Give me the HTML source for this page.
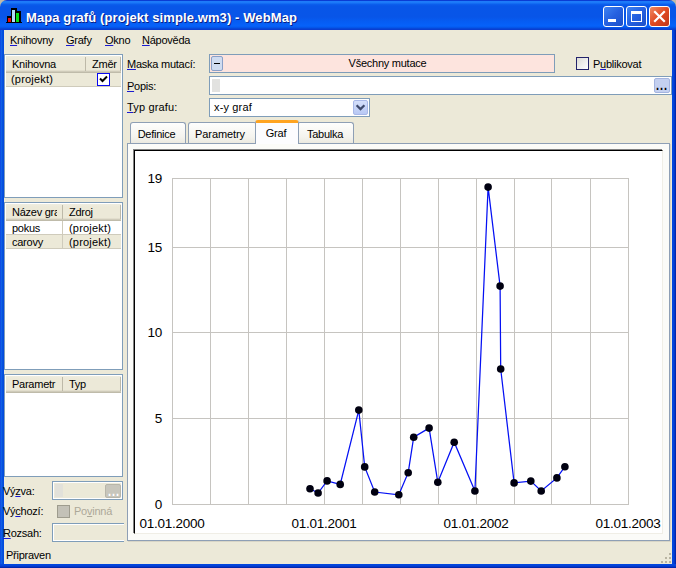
<!DOCTYPE html>
<html lang="cs">
<head>
<meta charset="utf-8">
<title>Mapa grafů (projekt simple.wm3) - WebMap</title>
<style>
html,body{margin:0;padding:0;}
body{width:676px;height:568px;overflow:hidden;background:#ece9d8;font-family:"Liberation Sans",sans-serif;font-size:11px;letter-spacing:-0.25px;color:#000;position:relative;}
.abs{position:absolute;}
#win{position:absolute;left:0;top:0;width:676px;height:568px;background:#ece9d8;overflow:hidden;}
/* window frame */
#title{position:absolute;left:0;top:0;width:676px;height:30px;border-radius:7px 7px 0 0;
 background:linear-gradient(to bottom,#0a3cd4 0,#0a3cd4 1px,#1f7cfa 1px,#1a78f8 3px,#0c60ee 4px,#0856e8 6px,#0855e8 17px,#065cf2 21px,#0662fa 26px,#0452e4 28px,#0a3ed0 29px,#0a3ed0 30px);}
#bl{position:absolute;left:0;top:30px;width:4px;height:538px;background:linear-gradient(to right,#0831d9 0,#166aee 1px,#0855dd 2px,#0048e0 4px);}
#br{position:absolute;left:672px;top:30px;width:4px;height:538px;background:linear-gradient(to right,#0048e0 0,#0441d8 2px,#001ea0 4px);}
#bb{position:absolute;left:0;top:564px;width:676px;height:4px;background:linear-gradient(to bottom,#0048e0 0,#0441d8 2px,#001ea0 4px);}
#corner-l,#corner-r{position:absolute;top:0;width:8px;height:8px;background:#fff;}
#ttext{position:absolute;left:26px;top:10px;font-weight:bold;font-size:13px;color:#fff;white-space:nowrap;text-shadow:1px 1px 0 #0a1f86;letter-spacing:0.1px;}
.tbtn{position:absolute;top:6px;width:21px;height:21px;border:1px solid #fff;border-radius:3px;box-sizing:border-box;
 background:linear-gradient(135deg,#3f83f1 0,#2560e0 50%,#1c4fc8 100%);}
.tbtn.close{background:linear-gradient(135deg,#f08a62 0,#e04a22 50%,#c0361a 100%);}
/* menu */
.menu{position:absolute;top:34px;white-space:nowrap;}
u{text-decoration:underline;text-decoration-color:#1a1ad0;text-decoration-thickness:1px;text-underline-offset:1px;}
/* lists */
.list{position:absolute;background:#fff;border:1px solid #7f9db9;box-sizing:border-box;overflow:hidden;}
.hdr{position:absolute;top:1px;height:17px;box-sizing:border-box;line-height:16.5px;padding-left:6px;white-space:nowrap;overflow:hidden;}
.hdr:after{content:'';position:absolute;right:0;top:1px;height:14px;width:1px;background:#bdb9a8;box-shadow:1px 0 0 #fff;}
.hdrbg{position:absolute;left:1px;top:1px;right:1px;height:17px;background:linear-gradient(#efede0 0,#ece9d8 3px,#ece9d8 14px,#e2decd 14px,#e2decd 15px,#cfcbba 15px,#cfcbba 16px,#bfbbaa 16px,#bfbbaa 17px);}
.row{position:absolute;left:1px;right:1px;height:13px;line-height:13px;white-space:nowrap;}
.row span{position:absolute;top:0;}
.lbl{position:absolute;white-space:nowrap;line-height:13px;}
.field{position:absolute;box-sizing:border-box;border:1px solid #7f9db9;background:#fff;}
.tab{position:absolute;top:122px;height:21px;box-sizing:border-box;border:1px solid #8e9fb5;border-bottom:none;border-radius:3px 3px 0 0;background:linear-gradient(#fefefd,#f4f3ee 70%,#ebe9df);text-align:center;line-height:22px;}
.tab.sel{top:120px;height:24px;background:#fcfcfe;border-top:3px solid #ffa421;line-height:21px;z-index:3;text-indent:-2px;border-radius:3px 3px 0 0;}
</style>
</head>
<body>
<div id="win">
 <div class="abs" style="left:0;top:0;width:676px;height:8px;background:#c2baa8"></div>
 <div id="title"></div>
 <div id="bl"></div><div id="br"></div><div id="bb"></div>
 <!-- app icon -->
 <svg class="abs" style="left:0;top:0" width="30" height="30" viewBox="0 0 30 30" shape-rendering="crispEdges">
  <rect x="7" y="16" width="5" height="6" fill="#000"/><rect x="11" y="8" width="6" height="14" fill="#000"/><rect x="15" y="11" width="6" height="11" fill="#000"/><rect x="6" y="22" width="16" height="1" fill="#000"/>
  <rect x="8" y="18" width="3" height="4" fill="#f00808"/><rect x="12" y="10" width="3" height="12" fill="#b0dcf8"/><rect x="16" y="13" width="3" height="9" fill="#08e018"/>
 </svg>
 <div id="ttext">Mapa grafů (projekt simple.wm3) - WebMap</div>
 <div class="tbtn" style="left:603px"><div class="abs" style="left:4px;top:12px;width:8px;height:3px;background:#fff"></div></div>
 <div class="tbtn" style="left:626px"><div class="abs" style="left:4px;top:4px;width:11px;height:11px;box-sizing:border-box;border:1px solid #fff;border-top-width:3px"></div></div>
 <div class="tbtn close" style="left:649px">
  <svg class="abs" style="left:0;top:0" width="19" height="19" viewBox="0 0 19 19"><path d="M5 5 L14 14 M14 5 L5 14" stroke="#fff" stroke-width="2.2" stroke-linecap="square"/></svg>
 </div>

 <!-- menu -->
 <div class="menu" style="left:10px"><u>K</u>nihovny</div>
 <div class="menu" style="left:66px"><u>G</u>rafy</div>
 <div class="menu" style="left:105px"><u>O</u>kno</div>
 <div class="menu" style="left:142px"><u>N</u>ápověda</div>

 <!-- list 1 -->
 <div class="list" style="left:4px;top:54px;width:119px;height:144px">
  <div class="hdrbg"></div>
  <div class="hdr" style="left:1px;width:80px">Knihovna</div>
  <div class="hdr" style="left:81px;width:35px">Změr</div>
  <div class="row" style="top:18px;height:13px;background:#ece9d8;border-bottom:1px solid #cfcbbb"><span style="left:5px;letter-spacing:0.2px">(projekt)</span></div>
  <div class="abs" style="left:92px;top:18px;width:13px;height:13px;box-sizing:border-box;border:1px solid #0808f0;background:#fff"></div>
  <svg class="abs" style="left:94px;top:20px" width="9" height="9" viewBox="0 0 9 9"><path d="M1 3.5 L3.5 6 L8 1.5" stroke="#000" stroke-width="2" fill="none"/></svg>
 </div>

 <!-- list 2 -->
 <div class="list" style="left:4px;top:202px;width:119px;height:168px">
  <div class="hdrbg"></div>
  <div class="hdr" style="left:1px;width:57px"><span style="display:block;width:45px;overflow:hidden">Název gra</span></div>
  <div class="hdr" style="left:58px;width:58px">Zdroj</div>
  <div class="row" style="top:18px;height:13px;line-height:14px;border-bottom:1px solid #cfcbbb"><span style="left:6px">pokus</span><span style="left:63px;letter-spacing:0.2px">(projekt)</span></div>
  <div class="row" style="top:32px;height:13px;line-height:14px;background:#ece9d8;border-bottom:1px solid #cfcbbb"><span style="left:6px">carovy</span><span style="left:63px;letter-spacing:0.2px">(projekt)</span></div>
  <div class="abs" style="left:57px;top:18px;width:1px;height:28px;background:#cfcbbb"></div>
 </div>

 <!-- list 3 -->
 <div class="list" style="left:4px;top:374px;width:119px;height:103px">
  <div class="hdrbg"></div>
  <div class="hdr" style="left:1px;width:57px">Parametr</div>
  <div class="hdr" style="left:58px;width:58px">Typ</div>
 </div>

 <!-- bottom-left controls -->
 <div class="lbl" style="left:3px;top:485px">Vý<u>z</u>va:</div>
 <div class="field" style="left:52px;top:481px;width:71px;height:19px;background:#ece9d8;box-shadow:inset 0 0 0 1px #fff"></div>
 <div class="abs" style="left:55px;top:484px;width:8px;height:13px;background:#e2e1da"></div>
 <div class="abs" style="left:105px;top:484px;width:16px;height:14px;background:#c8c6bc;border:1px solid #b8b6aa;box-sizing:border-box;border-radius:2px"></div>
 <div class="abs" style="left:108px;top:485px;width:14px;height:14px;color:#fff;font-size:11px;font-weight:bold;letter-spacing:0.94px;line-height:14px;white-space:nowrap;transform:scaleY(1.4);transform-origin:0 12px">...</div>
 <div class="lbl" style="left:3px;top:505px">Vý<u>c</u>hozí:</div>
 <div class="abs" style="left:57px;top:505px;width:13px;height:13px;box-sizing:border-box;border:1px solid #9e9c8e;background:#c3c1b7"></div>
 <div class="lbl" style="left:74px;top:505px;color:#aca899">Po<u style="text-decoration-color:#aca899">v</u>inná</div>
 <div class="lbl" style="left:3px;top:527px"><u>R</u>ozsah:</div>
 <div class="field" style="left:52px;top:523px;width:72px;height:19px;background:#ece9d8;border-right:none;box-shadow:inset 1px 0 0 #fff,inset 0 1px 0 #fff,inset 0 -1px 0 #fff"></div>

 <!-- status bar -->
 <div class="lbl" style="left:6px;top:549px">Připraven</div>
 <svg class="abs" style="left:661px;top:553px" width="12" height="12" viewBox="0 0 12 12">
  <g fill="#b8b4a2"><rect x="8" y="0" width="2" height="2"/><rect x="4" y="4" width="2" height="2"/><rect x="8" y="4" width="2" height="2"/><rect x="0" y="8" width="2" height="2"/><rect x="4" y="8" width="2" height="2"/><rect x="8" y="8" width="2" height="2"/></g>
 </svg>

 <!-- right form -->
 <div class="lbl" style="left:127px;top:58px"><u>M</u>aska mutací:</div>
 <div class="field" style="left:209px;top:54px;width:346px;height:19px;background:#fde4de;text-align:center;line-height:17px;padding-left:11px">Všechny mutace</div>
 <div class="abs" style="left:211px;top:56px;width:12px;height:15px;box-sizing:border-box;background:#d0dcf0;border:1px solid #8aa0c8;border-radius:2px"></div>
 <div class="abs" style="left:214px;top:63px;width:6px;height:1px;background:#000"></div>
 <div class="abs" style="left:576px;top:57px;width:13px;height:13px;box-sizing:border-box;border:1px solid #23236b;background:linear-gradient(135deg,#dcdcd7,#fff)"></div>
 <div class="lbl" style="left:593px;top:58px">P<u>u</u>blikovat</div>

 <div class="lbl" style="left:127px;top:80px"><u>P</u>opis:</div>
 <div class="field" style="left:209px;top:76px;width:463px;height:19px"></div>
 <div class="abs" style="left:212px;top:79px;width:8px;height:13px;background:#e2e2e0"></div>
 <div class="abs" style="left:654px;top:78px;width:16px;height:15px;background:#c4d0f0;border:1px solid #a4b4e0;box-sizing:border-box;border-radius:2px;"></div>
 <div class="abs" style="left:656px;top:79px;width:14px;height:14px;font-size:11px;font-weight:bold;letter-spacing:0.94px;line-height:14px;white-space:nowrap;transform:scaleY(1.4);transform-origin:0 12px">...</div>

 <div class="lbl" style="left:127px;top:101px;letter-spacing:0.15px"><u>T</u>yp grafu:</div>
 <div class="field" style="left:209px;top:98px;width:161px;height:19px;line-height:17px;padding-left:4px;letter-spacing:0.15px">x-y graf</div>
 <div class="abs" style="left:353px;top:100px;width:15px;height:15px;box-sizing:border-box;background:linear-gradient(#d4dffa,#b8c8f4);border:1px solid #a8b8e8;border-radius:2px"></div>
 <svg class="abs" style="left:355px;top:103px" width="11" height="9" viewBox="0 0 11 9"><path d="M1.6 2.2 L5.5 6.1 L9.4 2.2" stroke="#3e4a6c" stroke-width="2.2" fill="none"/></svg>

 <!-- tabs -->
 <div class="abs" style="left:127px;top:143px;width:543px;height:398px;box-sizing:border-box;border:1px solid #8e9fb5;background:#fbfbf8;box-shadow:1px 1px 0 #d8d5c6"></div>
 <div class="tab" style="left:130px;width:56px;text-indent:-3px">Definice</div>
 <div class="tab" style="left:188px;width:69px;text-indent:-5px;letter-spacing:-0.1px">Parametry</div>
 <div class="tab sel" style="left:255px;width:44px">Graf</div>
 <div class="tab" style="left:297px;width:57px;text-indent:-1px">Tabulka</div>

 <!-- chart -->
 <div class="abs" style="left:134px;top:150px;width:529px;height:384px;box-sizing:border-box;background:#fff;border-top:1px solid #000;border-left:1px solid #000;border-right:1px solid #f0eee6;border-bottom:1px solid #f0eee6;box-shadow:-1px -1px 0 #808080"></div>
 <svg class="abs" style="left:0;top:0" width="676" height="568" viewBox="0 0 676 568" font-family="Liberation Sans, sans-serif" font-size="13.5">
  <g stroke="#c6c4c0" stroke-width="1" shape-rendering="crispEdges">
   <path d="M172.5 178V505M210.5 178V505M248.5 178V505M286.5 178V505M324.5 178V505M362.5 178V505M400.5 178V505M438.5 178V505M476.5 178V505M514.5 178V505M551.5 178V505M590.5 178V505M628.5 178V505"/>
   <path d="M172 178.5H629M172 247.5H629M172 332.5H629M172 418.5H629M172 504.5H629"/>
  </g>
  <polyline fill="none" stroke="#0410f4" stroke-width="1.25" points="310.0,488.8 318.1,493.0 327.1,480.9 340.2,484.4 358.8,410.1 364.7,466.9 374.7,492.0 398.8,494.8 408.2,472.7 413.7,437.2 429.1,428.1 437.8,482.3 454.2,442.2 474.9,491.0 488.1,187.1 500.1,286.1 500.7,369.0 514.1,482.9 530.8,481.1 541.2,491.0 556.9,477.9 564.9,466.7"/>
  <g fill="#000010">
   <circle cx="310.0" cy="488.8" r="3.8"/><circle cx="318.1" cy="493.0" r="3.8"/><circle cx="327.1" cy="480.9" r="3.8"/><circle cx="340.2" cy="484.4" r="3.8"/><circle cx="358.8" cy="410.1" r="3.8"/><circle cx="364.7" cy="466.9" r="3.8"/><circle cx="374.7" cy="492.0" r="3.8"/><circle cx="398.8" cy="494.8" r="3.8"/><circle cx="408.2" cy="472.7" r="3.8"/><circle cx="413.7" cy="437.2" r="3.8"/><circle cx="429.1" cy="428.1" r="3.8"/><circle cx="437.8" cy="482.3" r="3.8"/><circle cx="454.2" cy="442.2" r="3.8"/><circle cx="474.9" cy="491.0" r="3.8"/><circle cx="488.1" cy="187.1" r="3.8"/><circle cx="500.1" cy="286.1" r="3.8"/><circle cx="500.7" cy="369.0" r="3.8"/><circle cx="514.1" cy="482.9" r="3.8"/><circle cx="530.8" cy="481.1" r="3.8"/><circle cx="541.2" cy="491.0" r="3.8"/><circle cx="556.9" cy="477.9" r="3.8"/><circle cx="564.9" cy="466.7" r="3.8"/>
  </g>
  <g fill="#000" text-anchor="end">
   <text x="162" y="183">19</text><text x="162" y="252">15</text><text x="162" y="337">10</text><text x="162" y="423">5</text><text x="162" y="509">0</text>
  </g>
  <g fill="#000" text-anchor="middle">
   <text x="172" y="528">01.01.2000</text><text x="324" y="528">01.01.2001</text><text x="476" y="528">01.01.2002</text><text x="628" y="528">01.01.2003</text>
  </g>
 </svg>
</div>
</body>
</html>
